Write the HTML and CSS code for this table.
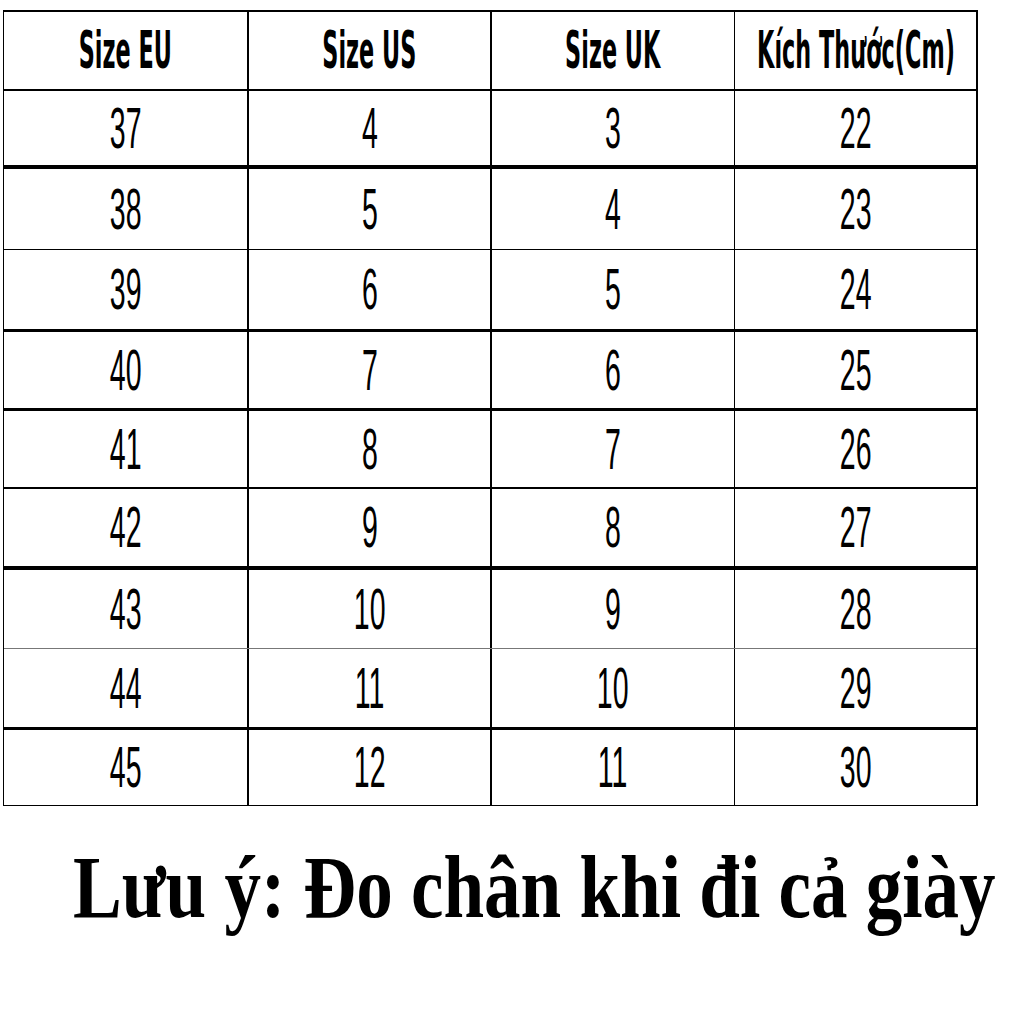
FILE: index.html
```html
<!DOCTYPE html>
<html lang="vi">
<head>
<meta charset="utf-8">
<title>Bảng size giày</title>
<link rel="stylesheet" href="styles.css">
</head>
<body>
<div class="chart">
  <div class="row head b2">
    <div class="cell"><span class="h">Size EU</span></div>
    <div class="cell"><span class="h">Size US</span></div>
    <div class="cell c3"><span class="h">Size UK</span></div>
    <div class="cell c4"><span class="h">Kích Thước(Cm)</span></div>
  </div>
  <div class="row b4">
    <div class="cell"><span class="n">37</span></div>
    <div class="cell"><span class="n">4</span></div>
    <div class="cell c3"><span class="n">3</span></div>
    <div class="cell c4"><span class="n">22</span></div>
  </div>
  <div class="row b1">
    <div class="cell"><span class="n">38</span></div>
    <div class="cell"><span class="n">5</span></div>
    <div class="cell c3"><span class="n">4</span></div>
    <div class="cell c4"><span class="n">23</span></div>
  </div>
  <div class="row b3">
    <div class="cell"><span class="n">39</span></div>
    <div class="cell"><span class="n">6</span></div>
    <div class="cell c3"><span class="n">5</span></div>
    <div class="cell c4"><span class="n">24</span></div>
  </div>
  <div class="row b3">
    <div class="cell"><span class="n">40</span></div>
    <div class="cell"><span class="n">7</span></div>
    <div class="cell c3"><span class="n">6</span></div>
    <div class="cell c4"><span class="n">25</span></div>
  </div>
  <div class="row b2">
    <div class="cell"><span class="n">41</span></div>
    <div class="cell"><span class="n">8</span></div>
    <div class="cell c3"><span class="n">7</span></div>
    <div class="cell c4"><span class="n">26</span></div>
  </div>
  <div class="row b4">
    <div class="cell"><span class="n">42</span></div>
    <div class="cell"><span class="n">9</span></div>
    <div class="cell c3"><span class="n">8</span></div>
    <div class="cell c4"><span class="n">27</span></div>
  </div>
  <div class="row bg">
    <div class="cell"><span class="n">43</span></div>
    <div class="cell"><span class="n">10</span></div>
    <div class="cell c3"><span class="n">9</span></div>
    <div class="cell c4"><span class="n">28</span></div>
  </div>
  <div class="row b3">
    <div class="cell"><span class="n">44</span></div>
    <div class="cell"><span class="n">11</span></div>
    <div class="cell c3"><span class="n">10</span></div>
    <div class="cell c4"><span class="n">29</span></div>
  </div>
  <div class="row last">
    <div class="cell"><span class="n">45</span></div>
    <div class="cell"><span class="n">12</span></div>
    <div class="cell c3"><span class="n">11</span></div>
    <div class="cell c4"><span class="n">30</span></div>
  </div>
</div>
<p class="note">Lưu ý: Đo chân khi đi cả giày</p>
</body>
</html>
```
FILE: styles.css
```css
html, body {
  margin: 0;
  padding: 0;
  background: #fff;
}

body {
  width: 1024px;
  height: 1024px;
  overflow: hidden;
  color: #000;
}

.chart {
  margin: 10px 0 0 3px;
  width: 972px;
  border-top: 2px solid #000;
  border-left: 1px solid #000;
  border-right: 2px solid #000;
  border-bottom: 1px solid #000;
  display: grid;
  grid-template-rows: 79px 78px 81px 82px 79px 78px 81px 79px 81px 75px;
}

.row {
  display: grid;
  grid-template-columns: 245px 243px 243px 241px;
  box-sizing: border-box;
  border-bottom: 1px solid #000;
}

.b1 { border-bottom-width: 1px; }
.b2 { border-bottom-width: 2px; }
.b3 { border-bottom-width: 3px; }
.b4 { border-bottom-width: 4px; }
.bg { border-bottom: 1px solid #777; }
.last { border-bottom: 0; }

.cell {
  box-sizing: border-box;
  border-right: 2px solid #000;
  display: flex;
  align-items: center;
  justify-content: center;
  overflow: visible;
}

.cell.c3 { border-right-width: 1px; }
.cell.c4 { border-right: 0; }

.h {
  display: inline-block;
  white-space: nowrap;
  font-family: "DejaVu Sans", "Liberation Sans", sans-serif;
  font-weight: bold;
  font-size: 52px;
  line-height: 1;
  transform: scaleX(0.43);
  margin-top: -2px;
}

.n {
  display: inline-block;
  white-space: nowrap;
  font-family: "Liberation Sans", Arial, sans-serif;
  font-weight: normal;
  font-size: 57px;
  line-height: 1;
  transform: scaleX(0.5);
}

.note {
  margin: 38px 0 0 73px;
  font-family: "Liberation Serif", "Times New Roman", serif;
  font-weight: bold;
  font-size: 88px;
  line-height: 1;
  white-space: nowrap;
  transform: scaleX(0.83);
  transform-origin: left center;
}
```
